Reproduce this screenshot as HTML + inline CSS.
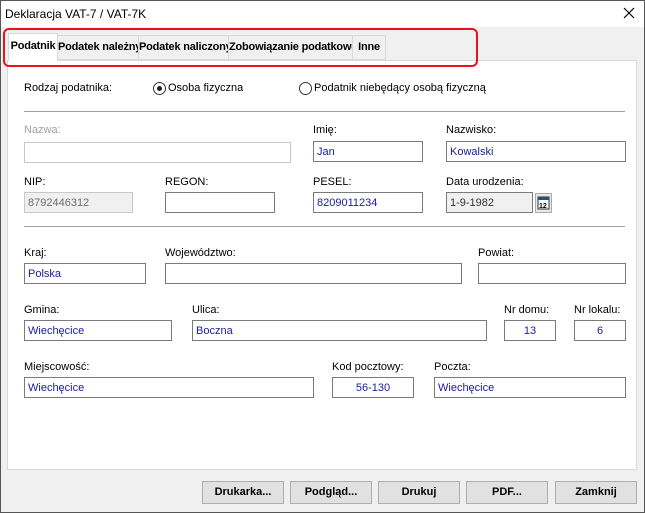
<!DOCTYPE html>
<html><head><meta charset="utf-8"><style>
*{margin:0;padding:0;box-sizing:border-box}
body{width:645px;height:513px;background:#f0f0f0;font-family:"Liberation Sans",sans-serif;font-size:11px;color:#000;position:relative;overflow:hidden}
.a{position:absolute;white-space:nowrap}
.win{position:absolute;left:0;top:0;width:645px;height:513px;border:1px solid #555}
.title{position:absolute;left:1px;top:1px;width:643px;height:26px;background:#fff}
.panel{position:absolute;left:7px;top:60px;width:630px;height:410px;background:#fff;border:1px solid #d9d9d9}
.tab{position:absolute;top:35px;height:25px;background:#f0f0f0;border:1px solid #d9d9d9;font-weight:bold;font-size:11px;letter-spacing:-0.2px;text-align:center;line-height:23px;white-space:nowrap;overflow:hidden}
.in{position:absolute;height:21px;border:1px solid #7a7a7a;background:#fff;color:#1a1aa0;padding-left:3px;padding-top:1px;line-height:18px;font-size:11px;white-space:nowrap}
.lab{position:absolute;font-size:11px;white-space:nowrap}
.hr{position:absolute;left:24px;width:601px;height:1px;background:#a0a0a0}
.btn{position:absolute;top:481px;width:82px;height:23px;background:#e1e1e1;border:1px solid #adadad;font-weight:bold;font-size:11px;text-align:center;line-height:21px}
.rad{position:absolute;width:13px;height:13px;border:1px solid #333;border-radius:50%;background:#fff}
</style></head><body>
<div class="win"></div>
<div class="title"></div>
<div class="a" style="left:5px;top:7px;font-size:12px">Deklaracja VAT-7 / VAT-7K</div>
<svg class="a" style="left:623px;top:7px" width="12" height="12"><path d="M1 1L11 11M11 1L1 11" stroke="#000" stroke-width="1.2"/></svg>
<div class="panel"></div>
<div class="tab" style="left:57px;width:82px">Podatek należny</div>
<div class="tab" style="left:138px;width:91px">Podatek naliczony</div>
<div class="tab" style="left:228px;width:125px">Zobowiązanie podatkowe</div>
<div class="tab" style="left:352px;width:34px">Inne</div>
<div class="tab" style="left:8px;top:33px;width:50px;height:28px;background:#fff;border-bottom:none;line-height:25px">Podatnik</div>
<div class="a" style="left:3px;top:28px;width:475px;height:39px;border:2px solid #e8141c;border-radius:6px"></div>

<div class="lab" style="left:24px;top:82px">Rodzaj podatnika:</div>
<div class="rad" style="left:153px;top:82px"></div><div class="a" style="left:157px;top:86px;width:5px;height:5px;border-radius:50%;background:#222"></div>
<div class="lab" style="left:168px;top:82px">Osoba fizyczna</div>
<div class="rad" style="left:299px;top:82px"></div>
<div class="lab" style="left:314px;top:82px">Podatnik niebędący osobą fizyczną</div>
<div class="hr" style="top:111px"></div>

<div class="lab" style="left:24px;top:124px;color:#a0a0a0">Nazwa:</div>
<div class="in" style="left:24px;top:142px;width:267px;border-color:#c8c8c8"></div>
<div class="lab" style="left:313px;top:124px">Imię:</div>
<div class="in" style="left:313px;top:141px;width:110px">Jan</div>
<div class="lab" style="left:446px;top:124px">Nazwisko:</div>
<div class="in" style="left:446px;top:141px;width:180px">Kowalski</div>

<div class="lab" style="left:24px;top:176px">NIP:</div>
<div class="in" style="left:24px;top:192px;width:109px;background:#f0f0f0;border-color:#c8c8c8;color:#6d6d6d">8792446312</div>
<div class="lab" style="left:165px;top:176px">REGON:</div>
<div class="in" style="left:165px;top:192px;width:110px"></div>
<div class="lab" style="left:313px;top:176px">PESEL:</div>
<div class="in" style="left:313px;top:192px;width:110px">8209011234</div>
<div class="lab" style="left:446px;top:176px">Data urodzenia:</div>
<div class="in" style="left:446px;top:192px;width:87px;background:#f0f0f0;color:#333">1-9-1982</div>
<svg class="a" style="left:535px;top:193px" width="17" height="20"><rect x="0.5" y="0.5" width="16" height="19" fill="#e8e8e8" stroke="#aaa"/><rect x="3" y="4" width="11" height="12" fill="#fff" stroke="#333"/><rect x="3" y="4" width="11" height="3" fill="#2a4a8a"/><text x="4" y="15" font-size="7" font-weight="bold" font-family="Liberation Sans">12</text></svg>
<div class="hr" style="top:226px"></div>

<div class="lab" style="left:24px;top:247px">Kraj:</div>
<div class="in" style="left:24px;top:263px;width:122px">Polska</div>
<div class="lab" style="left:165px;top:247px">Województwo:</div>
<div class="in" style="left:165px;top:263px;width:297px"></div>
<div class="lab" style="left:478px;top:247px">Powiat:</div>
<div class="in" style="left:478px;top:263px;width:148px"></div>

<div class="lab" style="left:24px;top:304px">Gmina:</div>
<div class="in" style="left:24px;top:320px;width:148px">Wiechęcice</div>
<div class="lab" style="left:192px;top:304px">Ulica:</div>
<div class="in" style="left:192px;top:320px;width:295px">Boczna</div>
<div class="lab" style="left:504px;top:304px">Nr domu:</div>
<div class="in" style="left:504px;top:320px;width:52px;text-align:center;padding-left:0">13</div>
<div class="lab" style="left:574px;top:304px">Nr lokalu:</div>
<div class="in" style="left:574px;top:320px;width:52px;text-align:center;padding-left:0">6</div>

<div class="lab" style="left:24px;top:361px">Miejscowość:</div>
<div class="in" style="left:24px;top:377px;width:290px">Wiechęcice</div>
<div class="lab" style="left:332px;top:361px">Kod pocztowy:</div>
<div class="in" style="left:332px;top:377px;width:82px;text-align:center;padding-left:0">56-130</div>
<div class="lab" style="left:434px;top:361px">Poczta:</div>
<div class="in" style="left:434px;top:377px;width:192px">Wiechęcice</div>

<div class="btn" style="left:202px">Drukarka...</div>
<div class="btn" style="left:290px">Podgląd...</div>
<div class="btn" style="left:378px">Drukuj</div>
<div class="btn" style="left:466px">PDF...</div>
<div class="btn" style="left:555px">Zamknij</div>
</body></html>
